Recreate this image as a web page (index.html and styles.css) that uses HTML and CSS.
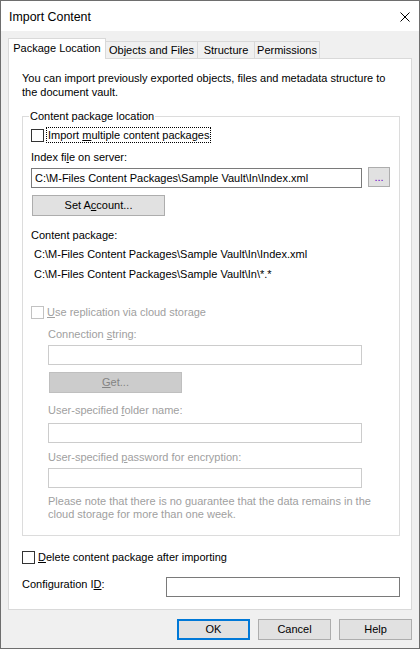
FILE: index.html
```html
<!DOCTYPE html>
<html>
<head>
<meta charset="utf-8">
<title>Import Content</title>
<link rel="stylesheet" href="styles.css">
</head>
<body>
<div class="window">
  <div class="titlebar">
    <span class="title">Import Content</span>
    <svg class="close" width="10" height="10" viewBox="0 0 10 10"><path d="M0.5 0.5L9.5 9.5M9.5 0.5L0.5 9.5" stroke="#000" stroke-width="1" fill="none"/></svg>
  </div>
  <div class="client">
    <div class="tabs">
      <div class="tab active tab-pkg">Package Location</div>
      <div class="tab tab-obj">Objects and Files</div>
      <div class="tab tab-str">Structure</div>
      <div class="tab tab-perm">Permissions</div>
    </div>
    <div class="panel">
      <p class="desc">You can import previously exported objects, files and metadata structure to<br>the document vault.</p>
      <fieldset class="group">
        <legend>Content package location</legend>
        <div class="check-row">
          <span class="cb"></span>
          <span class="focus">Import <u>m</u>ultiple content packages</span>
        </div>
        <div class="lbl lbl-index">Index fi<u>l</u>e on server:</div>
        <div class="input-row">
          <div class="tb tb-index">C:\M-Files Content Packages\Sample Vault\In\Index.xml</div>
          <div class="browse">...</div>
        </div>
        <div class="btn btn-wide btn-account">Set A<u>c</u>count...</div>
        <div class="lbl lbl-pkg">Content package:</div>
        <div class="path path1">C:\M-Files Content Packages\Sample Vault\In\Index.xml</div>
        <div class="path path2">C:\M-Files Content Packages\Sample Vault\In\*.*</div>
        <div class="check-row disabled cloud-row">
          <span class="cb cb-dis"></span>
          <span class="cb-text"><u>U</u>se replication via cloud storage</span>
        </div>
        <div class="sub disabled">
          <div class="lbl lbl-conn">Connection <u>s</u>tring:</div>
          <div class="tb tb-dis tb-conn"></div>
          <div class="btn btn-wide btn-dis btn-get"><u>G</u>et...</div>
          <div class="lbl lbl-folder">User-specified <u>f</u>older name:</div>
          <div class="tb tb-dis tb-folder"></div>
          <div class="lbl lbl-pass">User-specified <u>p</u>assword for encryption:</div>
          <div class="tb tb-dis tb-pass"></div>
          <p class="note">Please note that there is no guarantee that the data remains in the<br>cloud storage for more than one week.</p>
        </div>
      </fieldset>
      <div class="check-row delete-row">
        <span class="cb"></span>
        <span class="cb-text delete-text"><u>D</u>elete content package after importing</span>
      </div>
      <div class="config-row">
        <span class="config-lbl">Configuration I<u>D</u>:</span>
        <div class="tb tb-config"></div>
      </div>
    </div>
    <div class="buttons">
      <div class="btn btn-dlg btn-default">OK</div>
      <div class="btn btn-dlg">Cancel</div>
      <div class="btn btn-dlg">Help</div>
    </div>
  </div>
</div>
</body>
</html>
```
FILE: styles.css
```css
* { box-sizing: border-box; }
html, body { margin: 0; padding: 0; }
body {
  width: 420px;
  height: 649px;
  font-family: "Liberation Sans", Arial, sans-serif;
  font-size: 11px;
  color: #000;
  background: #f0f0f0;
}
u { text-decoration: underline; text-underline-offset: 1px; }

.window {
  width: 420px;
  height: 649px;
  border: 1px solid #6e6e6e;
  background: #f0f0f0;
  overflow: hidden;
}

.titlebar {
  height: 30px;
  background: #fff;
  display: flex;
  align-items: center;
  justify-content: space-between;
  padding-left: 8px;
  padding-right: 9px;
}
.title { font-size: 12.4px; line-height: 16px; margin-top: 1px; }
.close { display: block; margin-top: 1px; }

.client { padding: 7px 7px 0 7px; }

.tabs { display: flex; align-items: flex-end; height: 20px; }
.tab {
  height: 17px;
  line-height: 16px;
  border: 1px solid #d9d9d9;
  border-bottom: none;
  text-align: center;
  background: #f0f0f0;
  margin-left: -1px;
  white-space: nowrap;
}
.tab.active {
  height: 21px;
  line-height: 19px;
  margin-left: 0;
  margin-bottom: -1px;
  background: #fff;
  position: relative;
  z-index: 1;
}
.tab-pkg { width: 98px; }
.tab-obj { width: 93px; }
.tab-str { width: 58px; }
.tab-perm { width: 66px; }

.panel {
  background: #fff;
  border: 1px solid #d9d9d9;
  padding: 0 11px 12px 13px;
}
.desc { margin: 12px 0 0; line-height: 14px; }

.group {
  margin: 9px 0 0;
  padding: 3px 8px 14px;
  border: 1px solid #dcdcdc;
  min-width: 0;
}
.group legend {
  padding: 0 1px;
  margin-left: -2px;
  line-height: 16px;
}

.check-row { display: flex; align-items: center; height: 16px; }
.cb {
  width: 13px; height: 13px;
  border: 1px solid #333;
  background: #fff;
  flex: none;
}
.cb-dis { border-color: #c2c2c2; }
.focus {
  margin-left: 2px;
  border: 1px dotted #000;
  padding: 0 1px;
  line-height: 14px;
}
.cb-text { margin-left: 3px; line-height: 16px; }

.lbl { line-height: 16px; }
.lbl-index { margin-top: 6px; }

.input-row { display: flex; align-items: flex-start; height: 21px; margin-top: 2px; }
.tb {
  height: 20px;
  border: 1px solid #7a7a7a;
  background: #fff;
  line-height: 18px;
  padding-left: 3px;
  white-space: nowrap;
  overflow: hidden;
}
.tb-index { width: 331px; margin-top: 1px; }
.browse {
  width: 22px; height: 20px;
  margin-left: 6px;
  background: #e1e1e1;
  border: 1px solid #adadad;
  color: #6a00c8;
  text-align: center;
  line-height: 19px;
}

.btn {
  height: 21px;
  background: #e1e1e1;
  border: 1px solid #adadad;
  text-align: center;
  line-height: 19px;
}
.btn-wide { width: 133px; margin-left: 1px; }
.btn-account { margin-top: 7px; }

.lbl-pkg { margin-top: 11px; }
.path { padding-left: 3px; line-height: 16px; }
.path1 { margin-top: 3px; }
.path2 { margin-top: 4px; }

.cloud-row { margin-top: 22px; }
.disabled { color: #a0a0a0; }

.sub { padding-left: 17px; }
.tb-dis { border-color: #cccccc; }
.lbl-conn { margin-top: 6px; }
.tb-conn, .tb-folder, .tb-pass { width: 314px; }
.tb-conn { margin-top: 3px; }
.btn-dis { background: #cccccc; border-color: #bfbfbf; color: #838383; }
.btn-get { margin-top: 7px; }
.lbl-folder { margin-top: 9px; }
.tb-folder { margin-top: 5px; }
.lbl-pass { margin-top: 6px; }
.tb-pass { margin-top: 3px; }
.note { margin: 7px 0 0; line-height: 13px; }

.delete-row { margin-top: 13px; }

.config-row {
  display: flex;
  align-items: flex-start;
  justify-content: space-between;
  margin-top: 12px;
  height: 20px;
}
.config-lbl { line-height: 16px; margin-top: -1px; }
.tb-config { width: 234px; }

.buttons {
  display: flex;
  justify-content: flex-end;
  gap: 8px;
  margin-top: 9px;
}
.btn-dlg { width: 73px; }
.btn-default { border: 2px solid #0078d7; line-height: 17px; }
```
